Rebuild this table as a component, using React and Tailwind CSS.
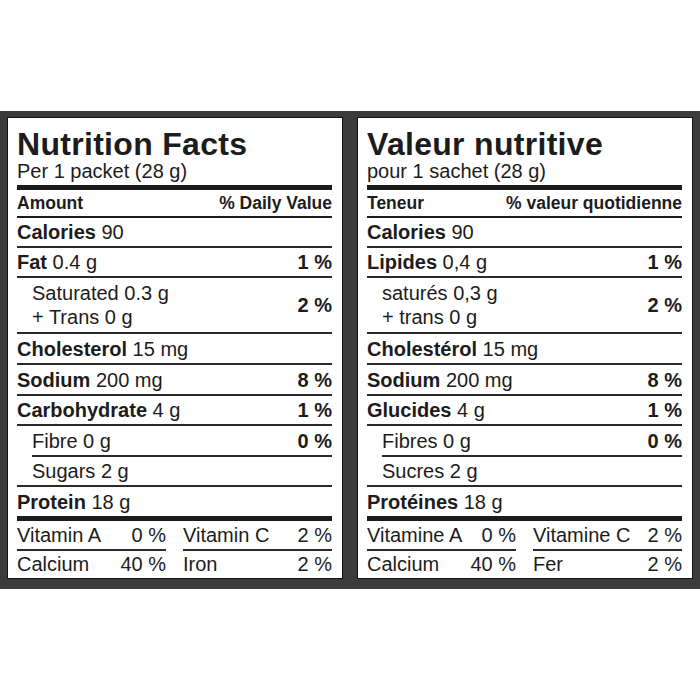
import React from "react";

const labels = {
  en: {
    title: "Nutrition Facts",
    serving: "Per 1 packet (28 g)",
    amount: "Amount",
    daily: "% Daily Value",
    rows: [
      { name: "Calories", value: "90", h: "h-[30px]" },
      { name: "Fat", value: "0.4 g", pct: "1 %", h: "h-[30px]" },
      { lines: ["Saturated 0.3 g", "+ Trans 0 g"], pct: "2 %", h: "h-[56px]", indent: true },
      { name: "Cholesterol", value: "15 mg", h: "h-[31px]" },
      { name: "Sodium", value: "200 mg", pct: "8 %", h: "h-[31px]" },
      { name: "Carbohydrate", value: "4 g", pct: "1 %", h: "h-[30px]" },
      { lines: ["Fibre 0 g"], pct: "0 %", h: "h-[31px]", shortRule: true },
      { lines: ["Sugars 2 g"], h: "h-[30px]", indent: true },
      { name: "Protein", value: "18 g", h: "h-[29px]", noRule: true },
    ],
    vitamins: [
      ["Vitamin A", "0 %"],
      ["Vitamin C", "2 %"],
      ["Calcium", "40 %"],
      ["Iron", "2 %"],
    ],
  },
  fr: {
    title: "Valeur nutritive",
    serving: "pour 1 sachet (28 g)",
    amount: "Teneur",
    daily: "% valeur quotidienne",
    rows: [
      { name: "Calories", value: "90", h: "h-[30px]" },
      { name: "Lipides", value: "0,4 g", pct: "1 %", h: "h-[30px]" },
      { lines: ["saturés 0,3 g", "+ trans 0 g"], pct: "2 %", h: "h-[56px]", indent: true },
      { name: "Cholestérol", value: "15 mg", h: "h-[31px]" },
      { name: "Sodium", value: "200 mg", pct: "8 %", h: "h-[31px]" },
      { name: "Glucides", value: "4 g", pct: "1 %", h: "h-[30px]" },
      { lines: ["Fibres 0 g"], pct: "0 %", h: "h-[31px]", shortRule: true },
      { lines: ["Sucres 2 g"], h: "h-[30px]", indent: true },
      { name: "Protéines", value: "18 g", h: "h-[29px]", noRule: true },
    ],
    vitamins: [
      ["Vitamine A", "0 %"],
      ["Vitamine C", "2 %"],
      ["Calcium", "40 %"],
      ["Fer", "2 %"],
    ],
  },
};

const Row = ({ row }) => {
  let cls = "flex items-center justify-between " + row.h;
  if (row.shortRule) cls += " ml-[15px] border-b-2 border-[#2a2a2a]";
  else if (!row.noRule) cls += " border-b-2 border-[#2a2a2a]";
  if (row.indent) cls += " pl-[15px]";

  return (
    <div className={cls}>
      {row.lines ? (
        <div className="flex flex-col leading-[24px]">
          {row.lines.map((l) => (
            <span key={l}>{l}</span>
          ))}
        </div>
      ) : (
        <span>
          <b className="font-bold">{row.name}</b> {row.value}
        </span>
      )}
      {row.pct && <span className="font-bold">{row.pct}</span>}
    </div>
  );
};

const Label = ({ data }) => {
  return (
    <div className="w-[336px] h-[462px] bg-white border border-[#111] pt-[10px] pl-[9px] pr-[10px] flex flex-col text-[#1c1c1c]">
      <h1 className="text-[32px] leading-[32px] tracking-[0.3px] font-bold">{data.title}</h1>
      <p className="text-[20px] leading-[22px]">{data.serving}</p>
      <div className="mt-[3px] h-[5px] bg-[#1c1c1c]" />
      <div className="h-[29px] flex items-center justify-between border-b-2 border-[#1c1c1c] text-[17.5px] font-bold">
        <span>{data.amount}</span>
        <span>{data.daily}</span>
      </div>
      <div className="text-[20px]">
        {data.rows.map((row, i) => (
          <Row key={i} row={row} />
        ))}
      </div>
      <div className="h-[5px] bg-[#1c1c1c]" />
      <div className="grid grid-cols-2 gap-x-[17px] text-[20px]">
        {data.vitamins.map(([name, pct], i) => (
          <div
            key={name}
            className={
              i < 2
                ? "h-[30px] flex items-center justify-between border-b-2 border-[#2a2a2a]"
                : "h-[27px] flex items-center justify-between"
            }
          >
            <span>{name}</span>
            <span>{pct}</span>
          </div>
        ))}
      </div>
    </div>
  );
};

export default function App() {
  return (
    <div className="w-[700px] h-[700px] bg-white pt-[111px] font-['Liberation_Sans',Arial,sans-serif]">
      <div className="bg-[#3b3b3b] flex gap-[14px] px-[7px] pt-[6px] pb-[10px]">
        <Label data={labels.en} />
        <Label data={labels.fr} />
      </div>
    </div>
  );
}
